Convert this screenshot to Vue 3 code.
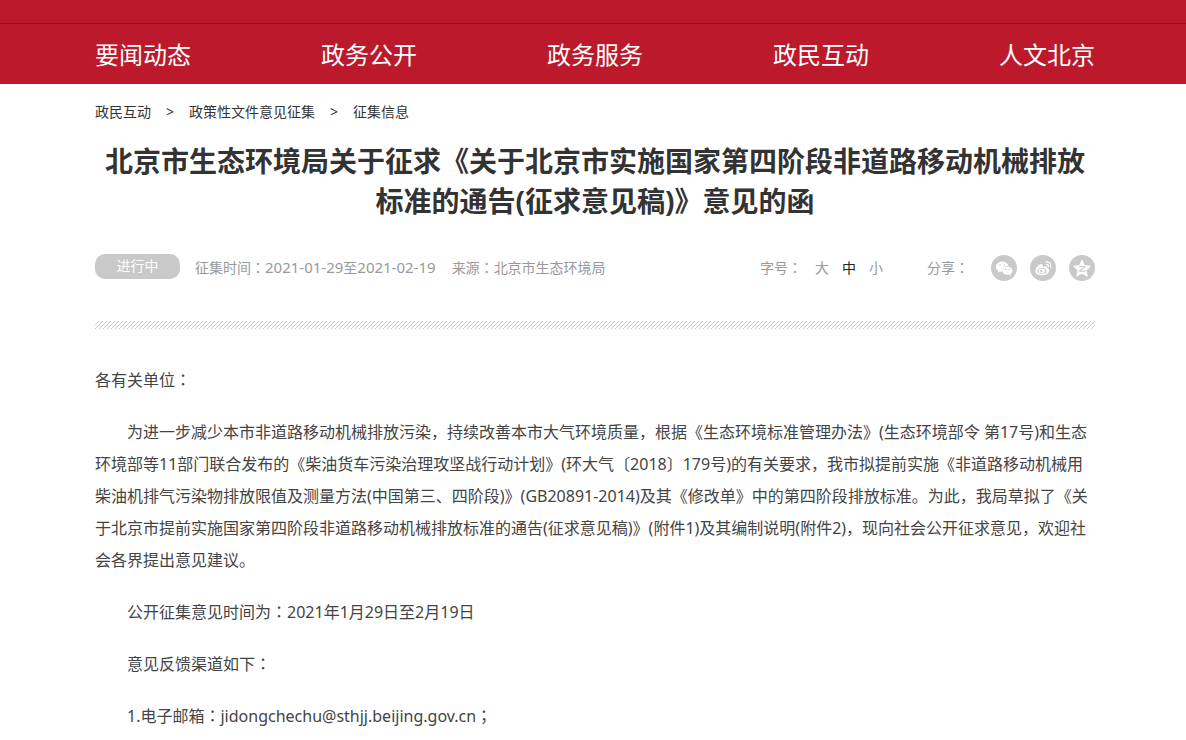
<script setup>
import { ref } from 'vue'

const nav = ['要闻动态', '政务公开', '政务服务', '政民互动', '人文北京']
const sizes = ['大', '中', '小']
const size = ref('中')
</script>

<template>
  <div class="page">
    <header class="header">
      <div class="topline"></div>
      <nav class="wrap nav">
        <a v-for="item in nav" :key="item" href="#">{{ item }}</a>
      </nav>
    </header>

    <main class="wrap">
      <nav class="crumbs" aria-label="当前位置">
        <a href="#">政民互动</a><span>&gt;</span><a href="#">政策性文件意见征集</a><span>&gt;</span><a href="#">征集信息</a>
      </nav>

      <h1>北京市生态环境局关于征求《关于北京市实施国家第四阶段非道路移动机械排放标准的通告(征求意见稿)》意见的函</h1>

      <div class="meta">
        <span class="status">进行中</span>
        <span class="period">征集时间<i>：</i><time>2021-01-29</time>至<time>2021-02-19</time></span>
        <span>来源<i>：</i>北京市生态环境局</span>
        <div class="sizes">
          <span>字号<i>：</i></span>
          <button v-for="s in sizes" :key="s" type="button" :class="{ active: s === size }" @click="size = s">{{ s }}</button>
        </div>
        <div class="share">
          <span>分享<i>：</i></span>
          <a href="#" aria-label="微信">
            <svg viewBox="0 0 26 26">
              <circle cx="13" cy="13" r="13" fill="#c9c9c9" />
              <path d="M11.2 6.6c-3.6 0-6.4 2.3-6.4 5.2 0 1.7.9 3 2.3 4l-.6 2 2.3-1.2c.8.2 1.5.3 2.4.3-.6-3.6 2.5-6.3 6.3-6.1-.6-2.5-3.2-4.2-6.3-4.2z" fill="#fff" />
              <path d="M16.3 11.5c-2.9 0-5 1.9-5 4.1s2.1 4.100 5 4.100c.7 0 1.300-.1 1.900-.3l1.900 1-.5-1.700c1.200-.8 1.900-1.900 1.900-3.100 0-2.200-2.300-4.100-5.200-4.100z" fill="#fff" />
              <g fill="#c9c9c9"><circle cx="9" cy="10" r=".8" /><circle cx="13.400" cy="10" r=".8" /><circle cx="14.700" cy="14.400" r=".7" /><circle cx="18.200" cy="14.400" r=".7" /></g>
            </svg>
          </a>
          <a href="#" aria-label="微博">
            <svg viewBox="0 0 26 26">
              <circle cx="13" cy="13" r="13" fill="#c9c9c9" />
              <path d="M12.300 9.200c-1.100-1.400-7 2.800-7 6.700 0 2.600 3.200 4.300 6.500 4.300 4.500 0 7.400-2.500 7.400-4.800 0-1.400-1-2-2-2.300.5-1.600-.5-2.600-4.300-1.300.2-.9.100-1.700-.6-2.600z" fill="#fff" />
              <ellipse cx="11.900" cy="15.900" rx="4.600" ry="3" fill="#c9c9c9" />
              <ellipse cx="11.700" cy="16" rx="3.300" ry="2.400" fill="#fff" />
              <circle cx="11.200" cy="16.200" r="1.200" fill="#c9c9c9" />
              <path d="M16 7c3.400-.5 5.500 2.200 4.600 5.200M16.200 9.400c1.500-.2 2.400.9 2.100 2.200" fill="none" stroke="#fff" stroke-width="1.200" stroke-linecap="round" />
            </svg>
          </a>
          <a href="#" aria-label="QQ空间">
            <svg viewBox="0 0 26 26">
              <circle cx="13" cy="13" r="13" fill="#c9c9c9" />
              <path d="M13 5l2.500 5.500 6 .7-4.500 4 1.300 6-5.300-3-5.300 3 1.300-6-4.500-4 6-.7z" fill="#fff" stroke="#fff" stroke-width=".8" stroke-linejoin="round" />
              <path d="M10 11.700c2-.3 4-.3 6 0l-5.500 4.300c2 .4 4 .4 6 .1" fill="none" stroke="#c9c9c9" stroke-width="1.100" />
            </svg>
          </a>
        </div>
      </div>

      <svg class="divider" aria-hidden="true">
        <defs>
          <pattern id="hatch" width="4" height="4" patternUnits="userSpaceOnUse">
            <path d="M3 0h1v1h-1zM2 1h1v1h-1zM1 2h1v1h-1zM0 3h1v1h-1z" fill="#c9c9c9" />
          </pattern>
        </defs>
        <rect width="100%" height="100%" fill="url(#hatch)" />
      </svg>

      <article>
        <p class="lead">各有关单位<i>：</i></p>
        <p>为进一步减少本市非道路移动机械排放污染，持续改善本市大气环境质量，根据《生态环境标准管理办法》(生态环境部令 第17号)和生态环境部等11部门联合发布的《柴油货车污染治理攻坚战行动计划》(环大气〔2018〕179号)的有关要求，我市拟提前实施《非道路移动机械用柴油机排气污染物排放限值及测量方法(中国第三、四阶段)》(GB20891-2014)及其《修改单》中的第四阶段排放标准。为此，我局草拟了《关于北京市提前实施国家第四阶段非道路移动机械排放标准的通告(征求意见稿)》(附件1)及其编制说明(附件2)，现向社会公开征求意见，欢迎社会各界提出意见建议。</p>
        <p>公开征集意见时间为<i>：</i>2021年1月29日至2月19日</p>
        <p>意见反馈渠道如下<i>：</i></p>
        <p>1.电子邮箱<i>：</i>jidongchechu@sthjj.beijing.gov.cn<i>；</i></p>
      </article>
    </main>
  </div>
</template>

<style>
body {
  margin: 0;
  background: #fff;
}
</style>

<style scoped>
.page {
  font-family: "Noto Sans", "Noto Sans CJK SC", sans-serif;
  font-size: 14px;
  color: #333;
  text-spacing-trim: space-all;
}
.wrap {
  box-sizing: border-box;
  max-width: 1004px;
  margin: 0 auto;
  padding-left: 4px;
}
a {
  color: inherit;
  text-decoration: none;
}
i {
  font-family: "Noto Sans CJK JP", sans-serif;
  font-style: normal;
  line-height: 1;
}
.header {
  background: #bc1a2c;
}
.topline {
  height: 23px;
  border-bottom: 1px solid #8f101f;
}
.nav {
  display: flex;
  justify-content: space-between;
  padding-top: 2px;
  color: #fff;
  font-size: 24px;
  line-height: 58px;
}
.crumbs {
  display: flex;
  line-height: 20px;
  padding-top: 18px;
}
.crumbs span {
  padding: 0 15px;
}
h1 {
  margin: 19px 0 0;
  font-size: 28px;
  line-height: 40px;
  font-weight: 700;
  text-align: center;
}
.meta {
  display: flex;
  align-items: center;
  height: 27px;
  margin-top: 33px;
  color: #999;
  line-height: 24px;
}
.status {
  align-self: flex-start;
  width: 85px;
  height: 25px;
  line-height: 24px;
  margin-right: 15px;
  border-radius: 10px;
  background: #c9c9c9;
  color: #fff;
  text-align: center;
}
.period {
  margin-right: 16px;
}
.period time {
  font-size: 15px;
}
.sizes {
  display: flex;
  gap: 13px;
  margin-left: auto;
}
button {
  padding: 0;
  border: 0;
  background: none;
  color: inherit;
  font: inherit;
  cursor: pointer;
}
.active {
  color: #222;
}
.share {
  display: flex;
  align-items: center;
  align-self: flex-end;
  gap: 13px;
  margin-left: 44px;
}
.share span {
  margin-right: 9px;
}
.share svg {
  display: block;
  width: 26px;
  height: 26px;
}
.divider {
  display: block;
  width: 100%;
  height: 8px;
  margin-top: 40px;
}
article {
  padding-top: 35px;
  font-size: 16px;
  line-height: 32px;
  color: #444;
}
p {
  margin: 0 0 20px;
  text-indent: 2em;
}
.lead {
  text-indent: 0;
}
</style>
